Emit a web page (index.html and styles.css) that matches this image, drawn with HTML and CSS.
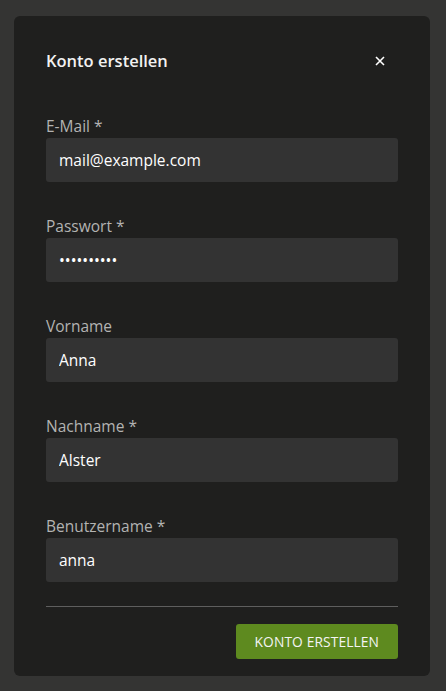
FILE: index.html
```html
<!DOCTYPE html>
<html lang="de">
<head>
<meta charset="utf-8">
<title>Konto erstellen</title>
<link rel="stylesheet" href="styles.css">
</head>
<body>
<div class="dialog">
  <div class="header">
    <h1 class="title">Konto erstellen</h1>
    <button class="close" aria-label="Schließen">
      <svg width="10" height="10" viewBox="0 0 10 10"><path d="M1 1L9 9M9 1L1 9" stroke="#fff" stroke-width="1.6" fill="none"/></svg>
    </button>
  </div>
  <form class="form">
    <label class="field"><span class="label">E-Mail *</span><input class="input" type="text" value="mail@example.com"></label>
    <label class="field"><span class="label">Passwort *</span><input class="input" type="password" value="geheim1234"></label>
    <label class="field"><span class="label">Vorname</span><input class="input" type="text" value="Anna"></label>
    <label class="field"><span class="label">Nachname *</span><input class="input" type="text" value="Alster"></label>
    <label class="field"><span class="label">Benutzername *</span><input class="input" type="text" value="anna"></label>
  </form>
  <div class="footer">
    <button class="submit">KONTO ERSTELLEN</button>
  </div>
</div>
</body>
</html>
```

FILE: styles.css
```css
html, body {
  margin: 0;
  padding: 0;
  background: #343433;
  height: 100%;
}
body {
  padding: 16px 16px 16px 14px;
  box-sizing: border-box;
  font-family: "Open Sans", "Noto Sans", sans-serif;
}
.dialog {
  width: 416px;
  box-sizing: border-box;
  background: #1f1f1e;
  border-radius: 6px;
  padding: 32px 32px 17px 32px;
}
.header {
  display: flex;
  align-items: center;
  justify-content: space-between;
  height: 26px;
}
.title {
  margin: 0;
  font-size: 16.5px;
  font-weight: 600;
  color: #f2f2f2;
  line-height: 26px;
}
.close {
  background: none;
  border: none;
  padding: 0;
  margin-right: 13px;
  width: 10px;
  height: 10px;
  display: flex;
}
.form {
  display: flex;
  flex-direction: column;
  gap: 33px;
  margin-top: 41px;
}
.field {
  display: flex;
  flex-direction: column;
  gap: 1px;
}
.label {
  font-size: 15.5px;
  line-height: 22px;
  color: #b3b3b2;
}
.input {
  height: 44px;
  box-sizing: border-box;
  border: none;
  border-radius: 3px;
  background: #333333;
  color: #ffffff;
  font-family: inherit;
  font-size: 15.5px;
  padding: 0 13px;
  outline: none;
}
.footer {
  margin-top: 24px;
  border-top: 1px solid #5e5e5e;
  padding-top: 17px;
  display: flex;
  justify-content: flex-end;
}
.submit {
  height: 35px;
  padding: 0 19px;
  background: #5e8a1f;
  color: #f4f4f4;
  border: none;
  border-radius: 3px;
  font-family: inherit;
  font-size: 13.8px;
  letter-spacing: 0.1px;
}
```
